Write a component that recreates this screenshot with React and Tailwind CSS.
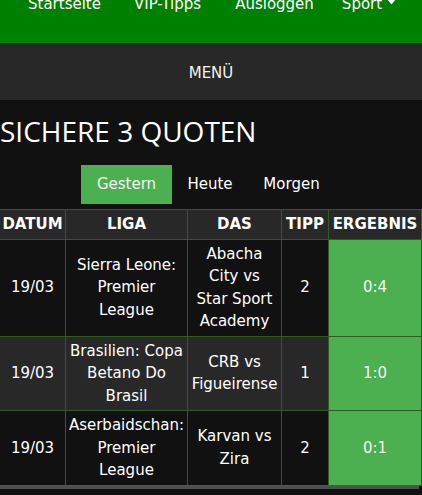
import React from "react";

const rows = [
  { d: "19/03", l: ["Sierra Leone:", "Premier", "League"], m: ["Abacha", "City vs", "Star Sport", "Academy"], t: "2", r: "0:4", bg: "bg-[#111111]" },
  { d: "19/03", l: ["Brasilien: Copa", "Betano Do", "Brasil"], m: ["CRB vs", "Figueirense"], t: "1", r: "1:0", bg: "bg-[#282828]" },
  { d: "19/03", l: ["Aserbaidschan:", "Premier", "League"], m: ["Karvan vs", "Zira"], t: "2", r: "0:1", bg: "bg-[#111111]" },
];

function Lines({ items }) {
  return items.map((s, i) => (
    <React.Fragment key={i}>
      {i > 0 && <br />}
      {s}
    </React.Fragment>
  ));
}

export default function App() {
  const font = { fontFamily: '"DejaVu Sans", Verdana, sans-serif' };
  const cell = "border-r border-b border-[#2e5d22] px-[2px] py-[3px] text-center align-middle whitespace-nowrap";
  return (
    <div className="min-h-screen bg-[#111111] text-white text-[15px] leading-[22.5px] overflow-hidden" style={font}>
      <div className="h-[43px] bg-[#008000] overflow-hidden">
        <div className="-mt-[7px] flex items-center pl-[28px] gap-[33px]">
          <span>Startseite</span>
          <span>VIP-Tipps</span>
          <span className="ml-[1px]">Ausloggen</span>
          <span className="ml-[-5px] flex items-center gap-[5px]">
            Sport
            <svg width="9" height="6" viewBox="0 0 9 6" className="mt-[-4px]">
              <path d="M0 0 H9 L4.5 5.5 Z" fill="#ffffff" />
            </svg>
          </span>
        </div>
      </div>
      <div className="h-[57px] pt-[3px] bg-[#282828] flex items-center justify-center text-[#f2f2f2]">MENÜ</div>
      <h1 className="mt-[12px] text-[28px] leading-[38px] font-normal font-['Open_Sans',sans-serif]">SICHERE 3 QUOTEN</h1>
      <div className="mt-[15px] flex pl-[81px]">
        <div className="h-[39px] w-[91px] bg-[#4caf50] flex items-center justify-center text-[#f4f4f4]">Gestern</div>
        <div className="h-[39px] w-[76px] flex items-center justify-center">Heute</div>
        <div className="h-[39px] w-[87px] flex items-center justify-center">Morgen</div>
      </div>
      <table className="mt-[5px] table-fixed border-separate border-spacing-0 w-[422px] border-t border-[#2e5d22]">
        <colgroup>
          <col className="w-[66px]" />
          <col className="w-[122px]" />
          <col className="w-[94px]" />
          <col className="w-[47px]" />
          <col className="w-[93px]" />
        </colgroup>
        <thead>
          <tr className="bg-[#282828] font-bold">
            <th className={cell}>DATUM</th>
            <th className={cell}>LIGA</th>
            <th className={cell}>DAS</th>
            <th className={cell}>TIPP</th>
            <th className={cell}>ERGEBNIS</th>
          </tr>
        </thead>
        <tbody>
          {rows.map((r, i) => (
            <tr key={i} className={r.bg}>
              <td className={cell}>{r.d}</td>
              <td className={cell}><Lines items={r.l} /></td>
              <td className={cell}><Lines items={r.m} /></td>
              <td className={cell}>{r.t}</td>
              <td className={cell + " bg-[#4caf50] text-[#f4f4f4]"}>{r.r}</td>
            </tr>
          ))}
        </tbody>
      </table>
      <div className="-mt-[1px] h-[4px] w-[419px] bg-[#555555]/90" />
    </div>
  );
}
